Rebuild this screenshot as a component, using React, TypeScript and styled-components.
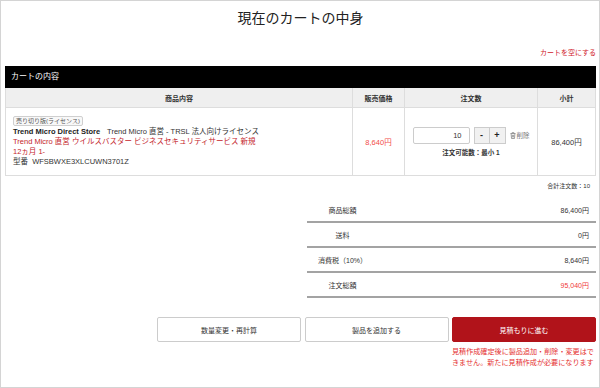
import React from 'react';
import styled, { createGlobalStyle } from 'styled-components';

const GlobalStyle = createGlobalStyle`
  body {
    margin: 0;
    font-family: "Liberation Sans", "Noto Sans CJK JP", sans-serif;
    color: #333;
  }
`;

const Page = styled.div`
  box-sizing: border-box;
  width: 600px;
  height: 388px;
  border: 1px solid #d4d4d4;
  padding: 8px 3px 0 4px;
  display: flex;
  flex-direction: column;
  background: #fff;
`;

const Title = styled.h1`
  margin: 0;
  font-size: 14px;
  font-weight: 400;
  line-height: 18px;
  text-align: center;
  color: #222;
`;

const EmptyCart = styled.div`
  margin-top: 21px;
  font-size: 7px;
  line-height: 10px;
  text-align: right;
  color: #d0202a;
`;

const SectionBar = styled.div`
  margin-top: 8px;
  height: 22px;
  line-height: 22px;
  padding-left: 6px;
  background: #000;
  color: #fff;
  font-size: 8px;
`;

const CartGrid = styled.div`
  display: grid;
  grid-template-columns: 347px 52px 133px 58px;
  border-left: 1px solid #ddd;
`;

const HeadCell = styled.div`
  box-sizing: border-box;
  height: 20px;
  display: flex;
  align-items: center;
  justify-content: center;
  background: #efefef;
  border-right: 1px solid #ddd;
  border-bottom: 1px solid #ddd;
  font-size: 7px;
  font-weight: 700;
  color: #333;
`;

const Cell = styled.div<{ $color?: string }>`
  box-sizing: border-box;
  height: 68px;
  display: flex;
  flex-direction: column;
  align-items: center;
  justify-content: center;
  border-right: 1px solid #ddd;
  border-bottom: 1px solid #ddd;
  font-size: 7.5px;
  color: ${(p) => p.$color || '#333'};
`;

const ProductCell = styled.div`
  box-sizing: border-box;
  height: 68px;
  padding: 8px 7px 0;
  border-right: 1px solid #ddd;
  border-bottom: 1px solid #ddd;
  font-size: 7.5px;
  line-height: 10px;
`;

const Badge = styled.span`
  display: inline-block;
  margin-bottom: 1px;
  padding: 0 2px;
  border: 1px solid #cfcfcf;
  border-radius: 2px;
  background: #f8f8f8;
  font-size: 6px;
  line-height: 8px;
  color: #555;
`;

const Line = styled.div<{ $red?: boolean }>`
  color: ${(p) => (p.$red ? '#c4242b' : '#333')};
  white-space: nowrap;
`;

const Store = styled.b`
  margin-right: 7px;
  color: #222;
`;

const QtyRow = styled.div`
  display: flex;
  align-items: center;
`;

const QtyInput = styled.div`
  box-sizing: border-box;
  width: 57px;
  height: 17px;
  padding-right: 7px;
  border: 1px solid #ccc;
  border-radius: 2px;
  font-size: 7.5px;
  line-height: 15px;
  text-align: right;
  color: #333;
`;

const StepGroup = styled.div`
  display: flex;
  margin-left: 4px;
`;

const StepButton = styled.div`
  box-sizing: border-box;
  width: 16px;
  height: 17px;
  display: flex;
  align-items: center;
  justify-content: center;
  border: 1px solid #ccc;
  background: #f1f1f1;
  font-size: 9px;
  font-weight: 700;
  color: #222;
  & + & {
    border-left: none;
  }
`;

const Delete = styled.div`
  display: flex;
  align-items: center;
  gap: 1px;
  margin-left: 4px;
  font-size: 6.5px;
  color: #777;
`;

const QtyHint = styled.div`
  margin-top: 3px;
  font-size: 6.5px;
  font-weight: 700;
  color: #333;
`;

const TotalCount = styled.div`
  margin-top: 6px;
  padding-right: 6px;
  font-size: 6px;
  line-height: 8px;
  text-align: right;
  color: #333;
`;

const Summary = styled.div`
  margin: 8px 0 0 auto;
  width: 289px;
`;

const SummaryRow = styled.div`
  box-sizing: border-box;
  height: 25px;
  display: flex;
  align-items: center;
  border-bottom: 2px solid #a3a3a3;
  font-size: 7px;
`;

const SummaryLabel = styled.div`
  width: 71px;
  text-align: center;
  color: #333;
`;

const SummaryValue = styled.div<{ $red?: boolean }>`
  flex: 1;
  padding-right: 7px;
  text-align: right;
  color: ${(p) => (p.$red ? '#f03a3a' : '#333')};
`;

const Actions = styled.div`
  margin-top: 19px;
  align-self: flex-end;
  display: grid;
  grid-template-columns: repeat(3, 144px);
  column-gap: 3.5px;
`;

const ActionButton = styled.div<{ $primary?: boolean }>`
  box-sizing: border-box;
  height: 25px;
  display: flex;
  align-items: center;
  justify-content: center;
  border: 1px solid ${(p) => (p.$primary ? '#b1131a' : '#ccc')};
  border-radius: 2px;
  background: ${(p) => (p.$primary ? '#b1131a' : '#fff')};
  color: ${(p) => (p.$primary ? '#fff' : '#333')};
  font-size: 7px;
`;

const Note = styled.div`
  grid-column: 3;
  margin-top: 4.5px;
  font-size: 7.1px;
  line-height: 11px;
  color: #e52f2f;
`;

const TrashIcon = () => (
  <svg width="6" height="7" viewBox="0 0 6 7" fill="none" stroke="#888" strokeWidth="0.8">
    <path d="M0.5 1.5h5M2 1.5V0.7h2v0.8M1.1 1.5l0.4 5h3l0.4-5M2.4 2.8v2.6M3.6 2.8v2.6" />
  </svg>
);

const summary = [
  { label: '商品総額', value: '86,400円' },
  { label: '送料', value: '0円' },
  { label: '消費税（10%）', value: '8,640円' },
  { label: '注文総額', value: '95,040円', red: true },
];

export default function App() {
  return (
    <>
      <GlobalStyle />
      <Page>
        <Title>現在のカートの中身</Title>
        <EmptyCart>カートを空にする</EmptyCart>
        <SectionBar>カートの内容</SectionBar>
        <CartGrid>
          <HeadCell>商品内容</HeadCell>
          <HeadCell>販売価格</HeadCell>
          <HeadCell>注文数</HeadCell>
          <HeadCell>小計</HeadCell>

          <ProductCell>
            <Badge>売り切り版(ライセンス)</Badge>
            <Line>
              <Store>Trend Micro Direct Store</Store>
              Trend Micro 直営 - TRSL 法人向けライセンス
            </Line>
            <Line $red>
              Trend Micro 直営 ウイルスバスター ビジネスセキュリティサービス 新規
              <br />
              12ヵ月 1-
            </Line>
            <Line>型番&nbsp; WFSBWXE3XLCUWN3701Z</Line>
          </ProductCell>
          <Cell $color="#f24b4b">8,640円</Cell>
          <Cell>
            <QtyRow>
              <QtyInput>10</QtyInput>
              <StepGroup>
                <StepButton>-</StepButton>
                <StepButton>+</StepButton>
              </StepGroup>
              <Delete>
                <TrashIcon />
                削除
              </Delete>
            </QtyRow>
            <QtyHint>注文可能数：最小 1</QtyHint>
          </Cell>
          <Cell>86,400円</Cell>
        </CartGrid>

        <TotalCount>合計注文数：10</TotalCount>

        <Summary>
          {summary.map((row) => (
            <SummaryRow key={row.label}>
              <SummaryLabel>{row.label}</SummaryLabel>
              <SummaryValue $red={row.red}>{row.value}</SummaryValue>
            </SummaryRow>
          ))}
        </Summary>

        <Actions>
          <ActionButton>数量変更・再計算</ActionButton>
          <ActionButton>製品を追加する</ActionButton>
          <ActionButton $primary>見積もりに進む</ActionButton>
          <Note>見積作成確定後に製品追加・削除・変更はできません。新たに見積作成が必要になります</Note>
        </Actions>
      </Page>
    </>
  );
}
